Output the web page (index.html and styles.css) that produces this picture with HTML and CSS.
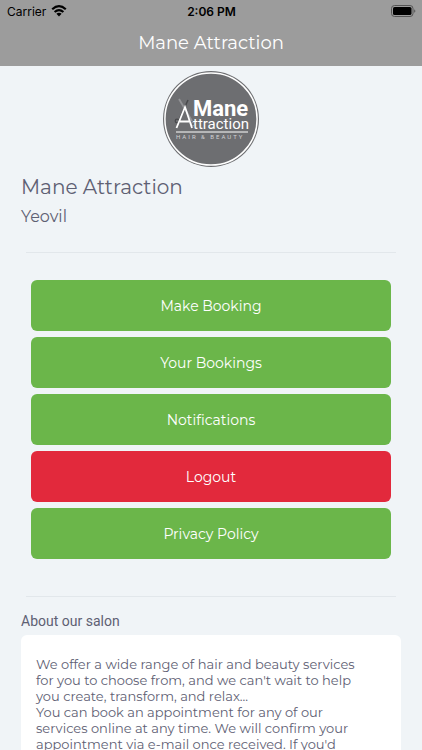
FILE: index.html
```html
<!DOCTYPE html>
<html lang="en">
<head>
<meta charset="utf-8">
<meta name="viewport" content="width=device-width, initial-scale=1">
<title>Mane Attraction</title>
<link rel="stylesheet" href="styles.css">
</head>
<body>
<div class="app">
  <header class="top">
    <div class="status">
      <div class="carrier">
        <span>Carrier</span>
        <svg class="wifi" viewBox="0 0 16 12" aria-hidden="true">
          <path d="M1.2 4.2Q8-1.8 14.8 4.2" fill="none" stroke="#000" stroke-width="2.2"/>
          <path d="M3.6 7Q8 3.1 12.4 7" fill="none" stroke="#000" stroke-width="2.1"/>
          <path d="M5.4 8.8Q8 6.8 10.6 8.8L8 11.5Z"/>
        </svg>
      </div>
      <span class="time">2:06 PM</span>
      <svg class="battery" viewBox="0 0 25 12" aria-hidden="true">
        <rect x=".5" y=".5" width="21.5" height="11" rx="3" fill="none" stroke="#555"/>
        <rect x="2" y="2" width="18.5" height="8" rx="1.6"/>
        <path d="M23.2 4.2Q25.6 6 23.2 7.8Z" fill="#555"/>
      </svg>
    </div>
    <div class="title">Mane Attraction</div>
  </header>
  <main class="content">
    <svg class="logo" viewBox="0 0 96 96" role="img" aria-label="Mane Attraction Hair &amp; Beauty">
      <circle cx="48" cy="48" r="48" fill="#6d6e71"/>
      <circle cx="48" cy="48" r="46.1" fill="none" stroke="#fff" stroke-width="1.5"/>
      <path d="M16 28L29 50" stroke="#929396" stroke-width="1.8"/>
      <path d="M25 29L16 49" stroke="#48494c" stroke-width="1.5"/>
      <circle cx="14" cy="50" r="1.8" fill="none" stroke="#48494c" stroke-width="1.2"/>
      <circle cx="30" cy="53" r="1.8" fill="none" stroke="#98999c"/>
      <path d="M13.5 57L22 36L29 57M17 50.5H26" fill="none" stroke="#fff" stroke-width="1.8"/>
      <text class="logo-name" x="30" y="45">Mane</text>
      <text class="logo-word" x="30" y="58">ttraction</text>
      <path d="M13 61H85" stroke="#fff"/>
      <text class="logo-tag" x="13" y="68">HAIR &amp; BEAUTY</text>
    </svg>
    <h1>Mane Attraction</h1>
    <p class="town">Yeovil</p>
    <hr>
    <nav class="actions">
      <button type="button">Make Booking</button>
      <button type="button">Your Bookings</button>
      <button type="button">Notifications</button>
      <button type="button" class="danger">Logout</button>
      <button type="button">Privacy Policy</button>
    </nav>
    <hr>
    <h2>About our salon</h2>
    <div class="card">
      We offer a wide range of hair and beauty services<br>
      for you to choose from, and we can't wait to help<br>
      you create, transform, and relax...<br>
      You can book an appointment for any of our<br>
      services online at any time. We will confirm your<br>
      appointment via e-mail once received. If you'd
    </div>
  </main>
</div>
</body>
</html>
```
FILE: styles.css
```css
* { box-sizing: border-box; }
body {
  margin: 0;
  background: #f0f4f7;
  color: #5e6073;
  font-family: Montserrat, Inter, "Open Sans", sans-serif;
  font-weight: 400;
}
.app {
  display: flex;
  flex-direction: column;
  height: 100vh;
  overflow: hidden;
}
.top {
  flex: none;
  height: 66px;
  background: #9c9c9c;
}
.status {
  display: grid;
  grid-template-columns: 1fr auto 1fr;
  align-items: center;
  height: 22px;
  padding: 0 6px 0 7px;
  color: #000;
  font-family: Inter, sans-serif;
  font-size: 12px;
}
.carrier {
  display: flex;
  align-items: center;
  gap: 5px;
}
.wifi { width: 16px; height: 12px; }
.time { font-weight: 600; }
.battery {
  justify-self: end;
  width: 25px;
  height: 12px;
}
.title {
  color: #fff;
  font-size: 18px;
  line-height: 42px;
  text-align: center;
}
.content {
  flex: 1;
  min-height: 0;
  overflow: hidden;
  padding: 5px 21px 0;
}
.logo {
  display: block;
  width: 96px;
  height: 96px;
  margin: 0 auto;
}
.logo text { fill: #fff; font-family: Roboto, sans-serif; }
.logo .logo-name { font-size: 22px; font-weight: 700; }
.logo .logo-word { font-size: 15px; }
.logo .logo-tag { font-size: 6px; letter-spacing: 2px; fill: #d2d3d5; }
h1 {
  margin: 6px 0 0;
  font-size: 20px;
  font-weight: 400;
  line-height: 28px;
}
.town {
  margin: 4px 0 0;
  font-size: 16px;
  line-height: 24px;
}
hr {
  height: 1px;
  margin: 23px 5px 27px;
  border: 0;
  background: #e2e7eb;
}
.actions {
  display: grid;
  gap: 6px;
  margin: 0 10px;
}
button {
  height: 51px;
  padding: 0;
  border: 0;
  border-radius: 6px;
  background: #6bb64a;
  color: #fff;
  font: inherit;
  font-size: 14px;
}
.actions + hr { margin: 37px 5px 14px; }
.danger { background: #e2293c; }
h2 {
  margin: 0 0 4px;
  font-family: Roboto, sans-serif;
  font-size: 14px;
  font-weight: 400;
  line-height: 20px;
}
.card {
  padding: 21px 15px;
  border-radius: 6px;
  background: #fff;
  font-size: 13px;
  line-height: 16px;
}
```
